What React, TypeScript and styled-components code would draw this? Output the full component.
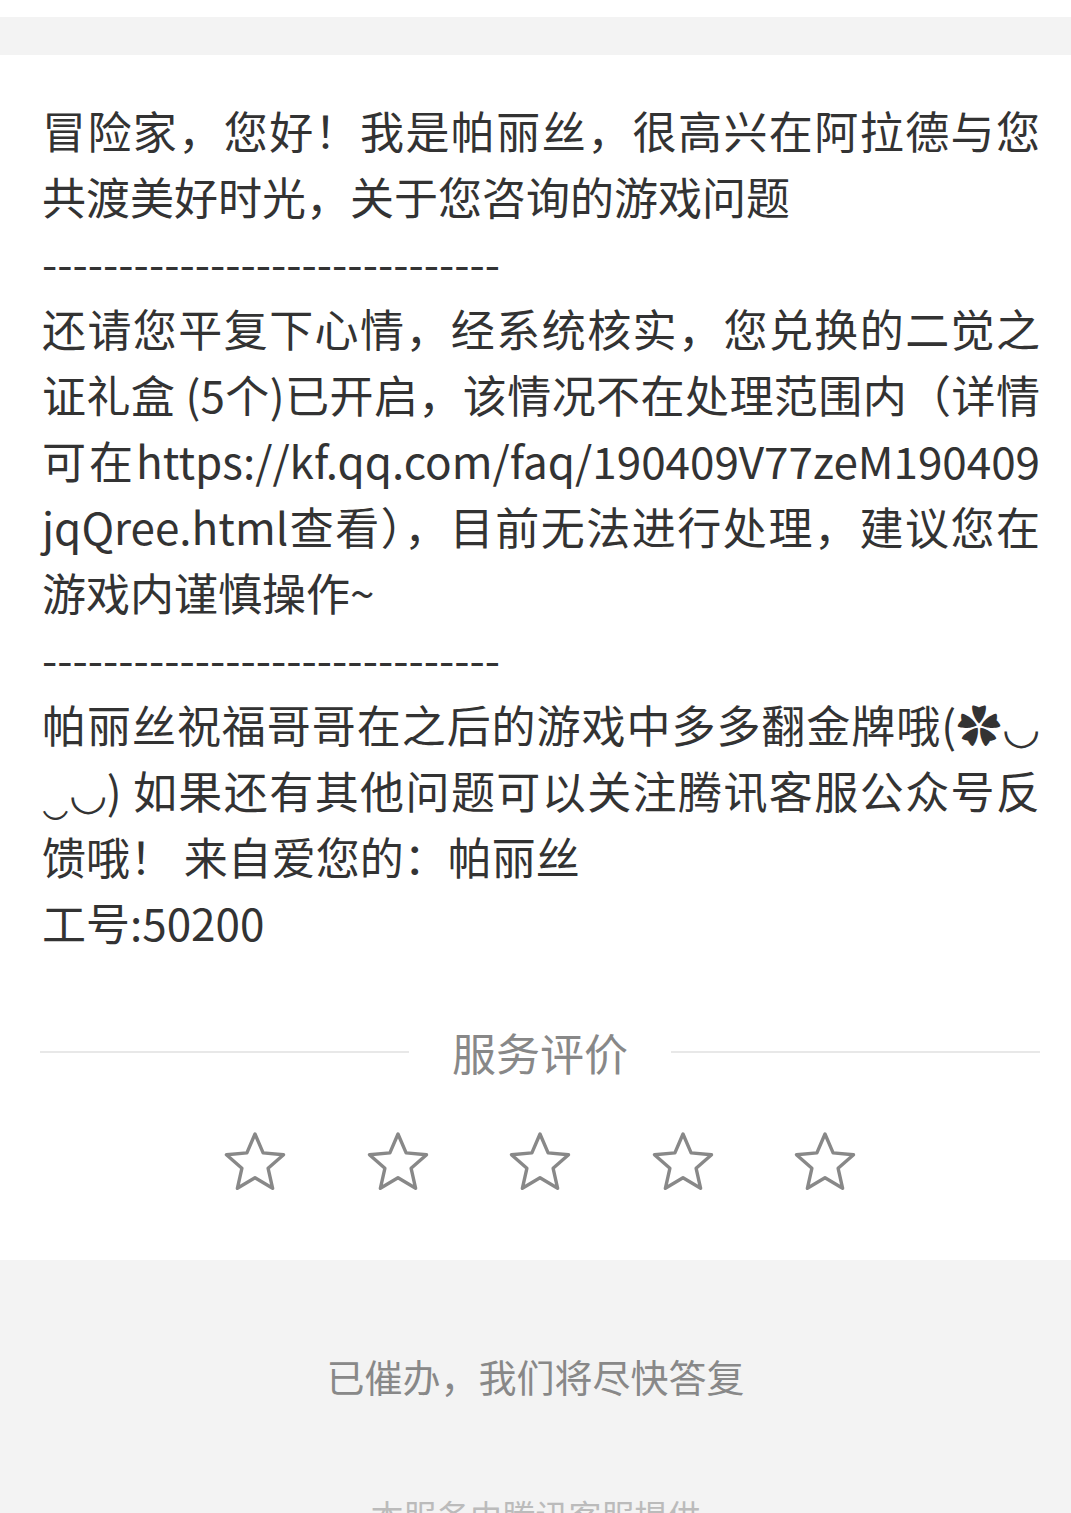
import styled, { createGlobalStyle } from 'styled-components';

const GlobalStyle = createGlobalStyle`
  * {
    box-sizing: border-box;
  }
  body {
    margin: 0;
    background: #ffffff;
    font-family: 'Noto Sans CJK SC', 'Noto Sans', sans-serif;
  }
`;

// each visual line of the reply, `full` lines are stretched edge to edge
const lines: { text: string; full?: boolean }[] = [
  { text: '冒险家，您好！我是帕丽丝，很高兴在阿拉德与您', full: true },
  { text: '共渡美好时光，关于您咨询的游戏问题' },
  { text: '------------------------------' },
  { text: '还请您平复下心情，经系统核实，您兑换的二觉之', full: true },
  { text: '证礼盒 (5个)已开启，该情况不在处理范围内（详情', full: true },
  { text: '可在https://kf.qq.com/faq/190409V77zeM190409', full: true },
  { text: 'jqQree.html查看），目前无法进行处理，建议您在', full: true },
  { text: '游戏内谨慎操作~' },
  { text: '------------------------------' },
  { text: '帕丽丝祝福哥哥在之后的游戏中多多翻金牌哦(✿◡', full: true },
  { text: '‿◡) 如果还有其他问题可以关注腾讯客服公众号反', full: true },
  { text: '馈哦！ 来自爱您的：帕丽丝' },
  { text: '工号:50200' },
];

const StarIcon = () => {
  const outer = 30;
  const inner = 13.8;
  const cx = 33;
  const cy = 34;
  const points = Array.from({ length: 10 }, (_, i) => {
    const r = i % 2 === 0 ? outer : inner;
    const a = (Math.PI / 5) * i - Math.PI / 2;
    return `${(cx + r * Math.cos(a)).toFixed(2)},${(cy + r * Math.sin(a)).toFixed(2)}`;
  }).join(' ');

  return (
    <svg width="66" height="64" viewBox="0 0 66 64">
      <polygon
        points={points}
        fill="none"
        stroke="#888888"
        strokeWidth="3.4"
        strokeLinejoin="round"
      />
    </svg>
  );
};

const App = () => {
  return (
    <Page>
      <GlobalStyle />
      <TopGap />
      <TopBand />
      <Message>
        {lines.map((line, i) => (
          <Line key={i} $full={line.full}>
            {line.text}
          </Line>
        ))}
      </Message>
      <Rating>
        <RatingTitle>
          <Rule />
          <span>服务评价</span>
          <Rule />
        </RatingTitle>
        <Stars>
          {[0, 1, 2, 3, 4].map((i) => (
            <StarButton key={i}>
              <StarIcon />
            </StarButton>
          ))}
        </Stars>
      </Rating>
      <Footer>
        <Notice>已催办，我们将尽快答复</Notice>
        <Provider>本服务由腾讯客服提供</Provider>
      </Footer>
    </Page>
  );
};

const Page = styled.div`
  width: 100%;
  min-height: 1513px;
  display: flex;
  flex-direction: column;
  background: #ffffff;
`;

const TopGap = styled.div`
  height: 17px;
  background: #ffffff;
`;

const TopBand = styled.div`
  height: 38px;
  background: #f3f3f3;
`;

const Message = styled.div`
  padding: 42px 31px 0 42px;
  color: #333333;
  font-size: 44px;
  line-height: 66px;
`;

const Line = styled.p<{ $full?: boolean }>`
  margin: 0;
  white-space: nowrap;
  text-align: justify;
  text-align-last: ${(p) => (p.$full ? 'justify' : 'left')};
  text-justify: inter-character;
`;

const Rating = styled.div`
  padding: 67px 31px 0 40px;
  display: flex;
  flex-direction: column;
  align-items: stretch;
`;

const RatingTitle = styled.div`
  display: flex;
  align-items: center;
  gap: 43px;
  color: #888888;
  font-size: 44px;
  line-height: 60px;

  & > span {
    flex-shrink: 0;
  }
`;

const Rule = styled.div`
  flex: 1;
  height: 2px;
  background: #e8e8e8;
`;

const Stars = styled.div`
  margin-top: 48px;
  display: flex;
  justify-content: center;
  gap: 76.5px;
`;

const StarButton = styled.div`
  width: 66px;
  height: 64px;
  display: flex;
  align-items: center;
  justify-content: center;
`;

const Footer = styled.div`
  margin-top: 66px;
  flex: 1;
  background: #f3f3f3;
  display: flex;
  flex-direction: column;
  align-items: center;
  padding-top: 90px;
`;

const Notice = styled.p`
  margin: 0;
  color: #888888;
  font-size: 38px;
  line-height: 52px;
`;

const Provider = styled.p`
  margin: 90px 0 0;
  color: #bbbbbb;
  font-size: 33px;
  line-height: 46px;
`;

export default App;
